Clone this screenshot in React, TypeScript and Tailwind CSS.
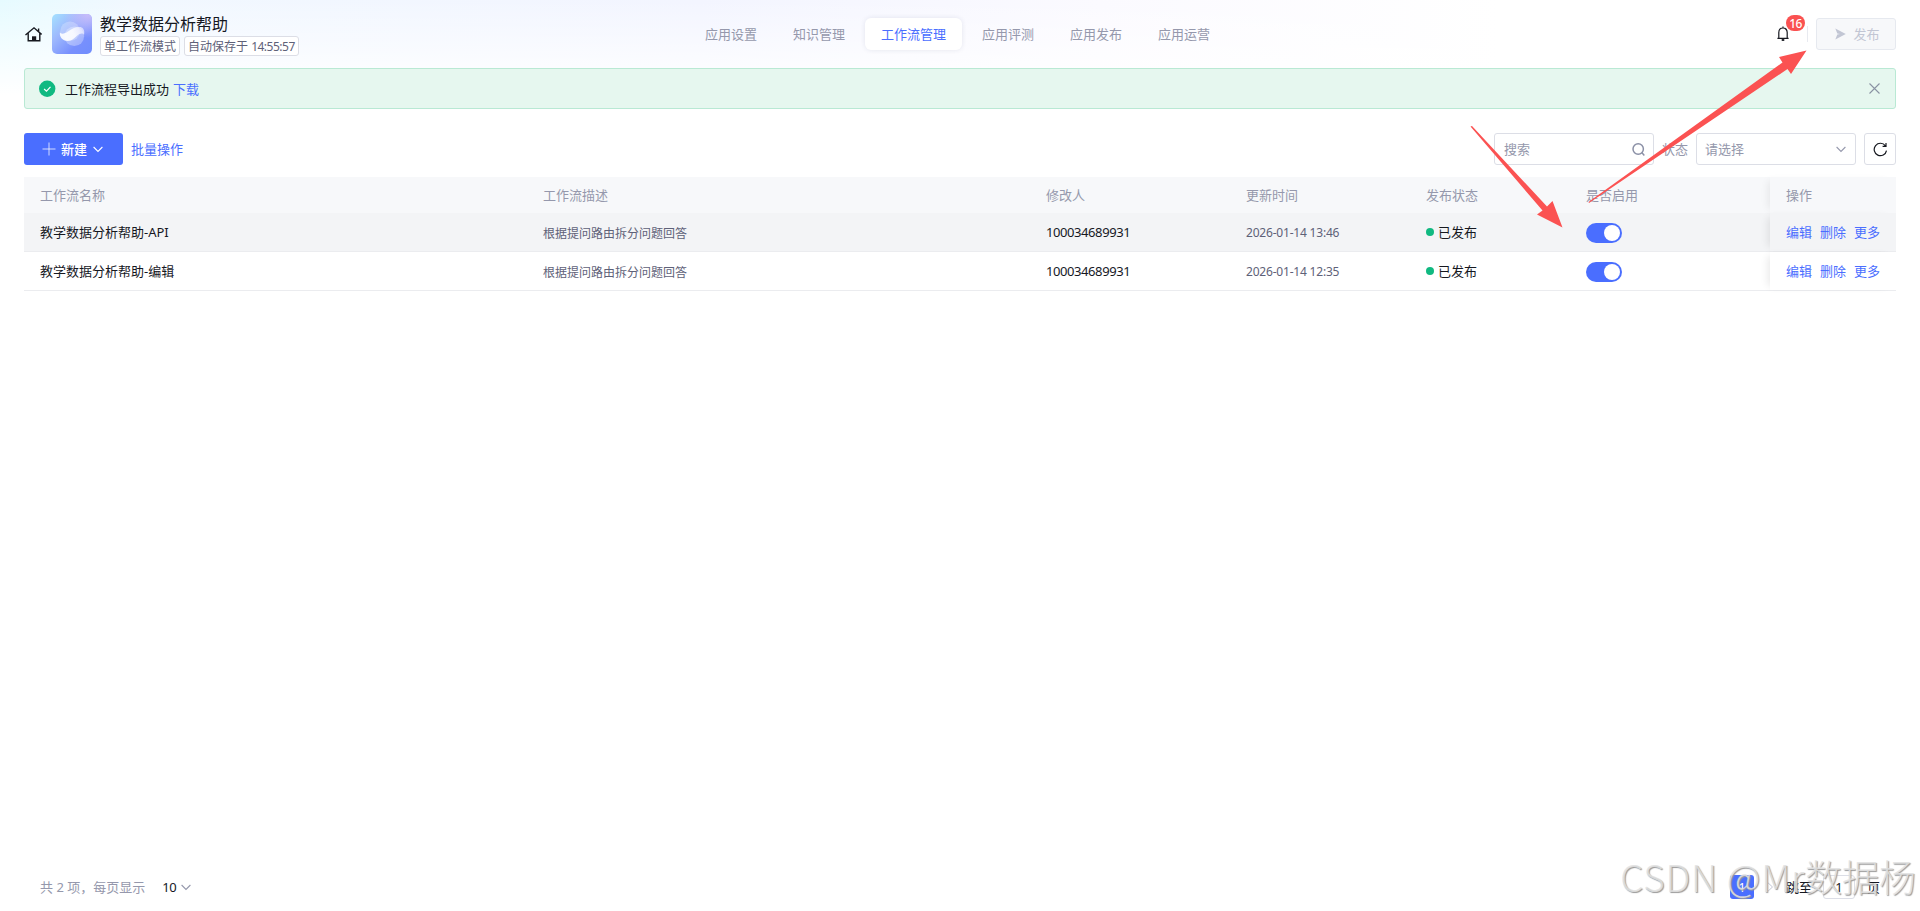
import type { ReactNode } from "react";

const navItems = ["应用设置", "知识管理", "工作流管理", "应用评测", "应用发布", "应用运营"];

const workflows = [
  {
    name: "教学数据分析帮助-API",
    description: "根据提问路由拆分问题回答",
    modifier: "100034689931",
    updatedAt: "2026-01-14 13:46",
    status: "已发布",
    hovered: true,
  },
  {
    name: "教学数据分析帮助-编辑",
    description: "根据提问路由拆分问题回答",
    modifier: "100034689931",
    updatedAt: "2026-01-14 12:35",
    status: "已发布",
    hovered: false,
  },
];

const columns = "grid grid-cols-[503px_503px_200px_180px_160px_200px_126px]";

function ChevronDown({ className }: { className: string }) {
  return (
    <svg width="10" height="7" viewBox="0 0 10 7" fill="none" stroke="currentColor" strokeWidth="1.1" className={className}>
      <path d="M0.6 1 L5 5.4 L9.4 1" />
    </svg>
  );
}

function Tag({ children }: { children: ReactNode }) {
  return (
    <span className="flex h-5 items-center rounded-[3px] border border-[#dcdee6] bg-white px-[3px] pt-[2px] text-xs text-[#5e6178]">
      {children}
    </span>
  );
}

function AppLogo() {
  return (
    <svg width="40" height="40" viewBox="0 0 40 40">
      <defs>
        <linearGradient id="logo-bg" x1="0" y1="0" x2="1" y2="1">
          <stop offset="0" stopColor="#a5e2ff" />
          <stop offset="0.35" stopColor="#9db8fd" />
          <stop offset="0.7" stopColor="#7890fd" />
          <stop offset="1" stopColor="#708dfd" />
        </linearGradient>
        <radialGradient id="logo-glow" cx="0.9" cy="0" r="0.6">
          <stop offset="0" stopColor="#c9bdfa" />
          <stop offset="1" stopColor="#c9bdfa" stopOpacity="0" />
        </radialGradient>
        <linearGradient id="logo-ribbon" x1="0" y1="0.6" x2="1" y2="0.3">
          <stop offset="0" stopColor="#fff" />
          <stop offset="0.55" stopColor="#fff" stopOpacity="0.95" />
          <stop offset="1" stopColor="#f0f0ff" stopOpacity="0.75" />
        </linearGradient>
      </defs>
      <rect width="40" height="40" rx="5" fill="url(#logo-bg)" />
      <rect width="40" height="40" rx="5" fill="url(#logo-glow)" />
      <circle cx="18" cy="17.3" r="9.8" fill="#fff" opacity="0.25" />
      <circle cx="22.3" cy="22.3" r="9.8" fill="#fff" opacity="0.32" />
      <path
        d="M8 18 C8.5 20.5 12.5 20 16 17.5 C20 14.2 24.5 12.4 28.5 13 C32 14 32.8 17 32 21 C31 18.8 28 19.2 25 21.8 C22 24.8 19.5 27 15.8 27 C10.3 27 7 22.5 8 18Z"
        fill="url(#logo-ribbon)"
        opacity="0.9"
      />
    </svg>
  );
}

function Header() {
  return (
    <header className="grid h-[68px] grid-cols-[665px_1fr_auto] px-6">
      <div className="flex pt-[14px]">
        <svg width="18" height="18" viewBox="0 0 18 18" fill="none" stroke="#16181f" strokeWidth="1.4" className="mt-[12px] mr-[10px]">
          <path d="M1.5 9 L10 1.8 L17.6 8.4 M4.2 7.2 V14.8 H15.8 V7.2 M14.6 2.6 V5.4" />
          <path d="M8 10.3 h4.2 v4.5 h-4.2z" fill="#16181f" stroke="none" />
        </svg>
        <AppLogo />
        <div className="ml-2">
          <div className="-mt-[1px] h-[23px] text-base leading-[22px] text-[#16181f]">教学数据分析帮助</div>
          <div className="flex gap-1">
            <Tag>单工作流模式</Tag>
            <Tag>
              自动保存于&nbsp;<span className="tracking-[-0.5px]">14:55:57</span>
            </Tag>
          </div>
        </div>
      </div>

      <nav className="flex gap-1 pt-[18px] text-[13px] text-[#9598ac]">
        {navItems.map((item) =>
          item === "工作流管理" ? (
            <a key={item} className="flex h-8 items-center rounded-md bg-white px-4 pt-[2px] text-[#4a6eff] shadow-[0_0_5px_rgba(30,40,90,0.1)]">
              {item}
            </a>
          ) : (
            <a key={item} className="flex h-8 items-center px-4 pt-[2px]">
              {item}
            </a>
          )
        )}
      </nav>

      <div className="flex items-center">
        <div className="relative mr-[17px]">
          <svg width="14" height="16" viewBox="0 0 14 16" fill="none" stroke="#16181f" strokeWidth="1.2">
            <path d="M1.4 12.4 H12.6 M2.8 12.2 V6.6 C2.8 3.8 4.6 2 7 2 C9.4 2 11.2 3.8 11.2 6.6 V12.2 M7 0.6 V2" />
            <path d="M5.7 14 h2.6" strokeWidth="1.8" />
          </svg>
          <span className="absolute -top-[11px] left-[10px] flex h-4 w-[19px] items-center justify-center rounded-full bg-[#fa5151] pt-px text-xs font-medium tracking-[-0.6px] text-white">
            16
          </span>
        </div>
        <div className="mr-2 h-4 w-px bg-[#e8eaf0]" />
        <button className="flex h-8 w-20 items-center justify-center gap-[7px] rounded-[3px] border border-[#e6e9ef] bg-[#f7f8fa] pl-[3px] text-[13px] text-[#c2c6d4]">
          <svg width="11" height="12" viewBox="0 0 11 12" fill="#c2c6d4">
            <path d="M0.3 0.4 L10.8 6 L0.3 11.6 L2.3 6.5 L5 6 L2.3 5.5Z" />
          </svg>
          <span className="pt-px">发布</span>
        </button>
      </div>
    </header>
  );
}

function SuccessAlert() {
  return (
    <div className="mx-6 flex h-[41px] items-center rounded-[3px] border border-[#b9e9d4] bg-[#e6f7ef] pr-[15px] pl-[14px] text-[13px]">
      <svg width="17" height="17" viewBox="0 0 17 17">
        <circle cx="8.2" cy="8.8" r="8.2" fill="#10b981" />
        <path d="M5.1 9 L7.5 11.2 L11.5 6.9" fill="none" stroke="#fff" strokeWidth="1.2" />
      </svg>
      <span className="ml-[9px] pt-[2px] text-[#16181f]">工作流程导出成功</span>
      <a className="ml-1 pt-[2px] text-[#4a6eff]">下载</a>
      <svg width="11" height="11" viewBox="0 0 11 11" stroke="#8a93a3" strokeWidth="1.1" className="ml-auto">
        <path d="M0.5 0.5 L10.5 10.5 M10.5 0.5 L0.5 10.5" />
      </svg>
    </div>
  );
}

function Toolbar() {
  return (
    <div className="mx-6 mt-6 flex h-8 items-center text-[13px]">
      <button className="flex h-8 w-[99px] items-center rounded-[3px] bg-[#4a6eff] pl-[18px] font-medium text-white">
        <svg width="14" height="14" viewBox="0 0 14 14" stroke="#fff" strokeOpacity="0.75" className="mr-[5px]">
          <path d="M7 0.5 V13.5 M0.5 7 H13.5" />
        </svg>
        <span className="pt-[2px]">新建</span>
        <ChevronDown className="ml-[6px]" />
      </button>
      <a className="ml-2 pt-[2px] text-[#4a6eff]">批量操作</a>

      <div className="ml-auto flex h-8 w-40 items-center justify-between rounded-[3px] border border-[#dcdee6] bg-white pr-2 pl-[9px] text-[#9598ac]">
        <span className="pt-[2px]">搜索</span>
        <svg width="13" height="13" viewBox="0 0 13 13" fill="none" stroke="#8b90a6" strokeWidth="1.5">
          <circle cx="6.2" cy="6" r="5.2" />
          <path d="M9.8 9.6 L12.3 12.4" />
        </svg>
      </div>
      <span className="ml-2 pt-[2px] text-[#9598ac]">状态</span>
      <div className="ml-2 flex h-8 w-40 items-center justify-between rounded-[3px] border border-[#dcdee6] bg-white pr-[9px] pl-2 text-[#9598ac]">
        <span className="pt-[2px]">请选择</span>
        <ChevronDown className="" />
      </div>
      <button className="ml-2 flex size-8 items-center justify-center rounded-[3px] border border-[#dcdee6] bg-white">
        <svg width="15" height="15" viewBox="0 0 15 15" fill="none" stroke="#16181f" strokeWidth="1.2">
          <path d="M13.5 8.6 A6.2 6.2 0 1 1 12.4 3.8 M13 1 V4.4 H9.6" />
        </svg>
      </button>
    </div>
  );
}

function Switch() {
  return (
    <span className="flex h-5 w-9 items-center justify-end rounded-full bg-[#4a6eff] pr-[2px]">
      <span className="size-4 rounded-full bg-white" />
    </span>
  );
}

function WorkflowTable() {
  return (
    <div className="mx-6 mt-3 text-[13px]">
      <div className={`${columns} h-9 items-center bg-[#f7f8fa] text-[#9598ac]`}>
        <div className="pt-[2px] pl-4">工作流名称</div>
        <div className="pt-[2px] pl-4">工作流描述</div>
        <div className="pt-[2px] pl-4">修改人</div>
        <div className="pt-[2px] pl-4">更新时间</div>
        <div className="pt-[2px] pl-4">发布状态</div>
        <div className="pt-[2px] pl-4">是否启用</div>
        <div className="flex h-full items-center bg-[#f7f8fa] pt-[2px] pl-4 shadow-[-6px_0_8px_-4px_rgba(0,0,0,0.07)]">操作</div>
      </div>
      {workflows.map((row) => (
        <div
          key={row.name}
          className={`${columns} h-[39px] items-center border-b border-[#ebecef] text-[#16181f] ${row.hovered ? "bg-[#f3f4f6]" : "bg-white"}`}
        >
          <div className="pt-[2px] pl-4">{row.name}</div>
          <div className="pt-[4px] pl-4 text-xs text-[#5e6178]">{row.description}</div>
          <div className="pt-[2px] pl-4 tracking-[-0.42px]">{row.modifier}</div>
          <div className="pt-[2px] pl-4 text-xs tracking-[-0.2px] text-[#5e6178]">{row.updatedAt}</div>
          <div className="flex items-center pl-4">
            <span className="mr-1 size-2 rounded-full bg-[#10b981]" />
            <span className="pt-[2px]">{row.status}</span>
          </div>
          <div className="pt-[1px] pl-4">
            <Switch />
          </div>
          <div
            className={`flex h-full items-center gap-2 pt-[2px] pl-4 text-[#4a6eff] shadow-[-6px_0_8px_-4px_rgba(0,0,0,0.09)] ${row.hovered ? "bg-[#f3f4f6]" : "bg-white"}`}
          >
            <a>编辑</a>
            <a>删除</a>
            <a>更多</a>
          </div>
        </div>
      ))}
    </div>
  );
}

function Pagination() {
  return (
    <footer className="mt-auto mb-3 flex h-6 items-center pr-10 pl-10 text-[13px] text-[#16181f]">
      <span className="pt-[2px] text-[#9598ac]">共 2 项，每页显示</span>
      <span className="ml-[17px] pt-[2px] tracking-[-0.5px]">10</span>
      <ChevronDown className="ml-[5px] text-[#9598ac]" />
      <span className="ml-auto flex size-6 items-center justify-center rounded-[3px] bg-[#4a6eff] pt-[2px] text-white">1</span>
      <svg width="7" height="10" viewBox="0 0 7 10" fill="none" stroke="#c2c6d4" className="ml-[13px]">
        <path d="M1 0.8 L5.5 5 L1 9.2" />
      </svg>
      <span className="ml-3 pt-[2px]">跳至</span>
      <span className="ml-[11px] flex h-6 w-8 items-center justify-center rounded-[3px] border border-[#dcdee6] pt-[2px]">1</span>
      <span className="ml-3 pt-[2px]">页</span>
    </footer>
  );
}

export default function App() {
  return (
    <div className="relative flex h-[911px] w-[1920px] flex-col overflow-hidden bg-white bg-[linear-gradient(180deg,rgba(255,255,255,0)_0px,#fff_95px),linear-gradient(90deg,#e6fbff_0px,#f1f8ff_130px,#f3f5ff_700px,#fbfaff_1100px,#fff_1500px)] font-['Noto_Sans','Noto_Sans_CJK_SC',sans-serif]">
      <Header />
      <SuccessAlert />
      <Toolbar />
      <WorkflowTable />
      <Pagination />

      {/* Annotation arrows */}
      <svg width="1920" height="911" viewBox="0 0 1920 911" fill="#fb5252" className="pointer-events-none absolute inset-0">
        <path d="M1470.5 126.5 L1472 126 L1547 206.5 L1552.5 201 L1562.5 227.5 L1537 214.5 L1542.5 210.5Z" />
        <path d="M1589 203 L1588.5 202 L1782.5 62.5 L1779 57 L1806.5 50.5 L1791 74 L1787.5 69Z" />
      </svg>

      {/* Watermark */}
      <div className="pointer-events-none absolute right-[4px] bottom-[8px] font-['Noto_Sans_CJK_SC',sans-serif] text-[37px] leading-[54px] font-light whitespace-nowrap text-[#e2e2e2]/85 [text-shadow:1px_1px_1px_#999]">
        <span className="tracking-[0.7px]">CSDN @Mr</span>数据杨
      </div>
    </div>
  );
}
